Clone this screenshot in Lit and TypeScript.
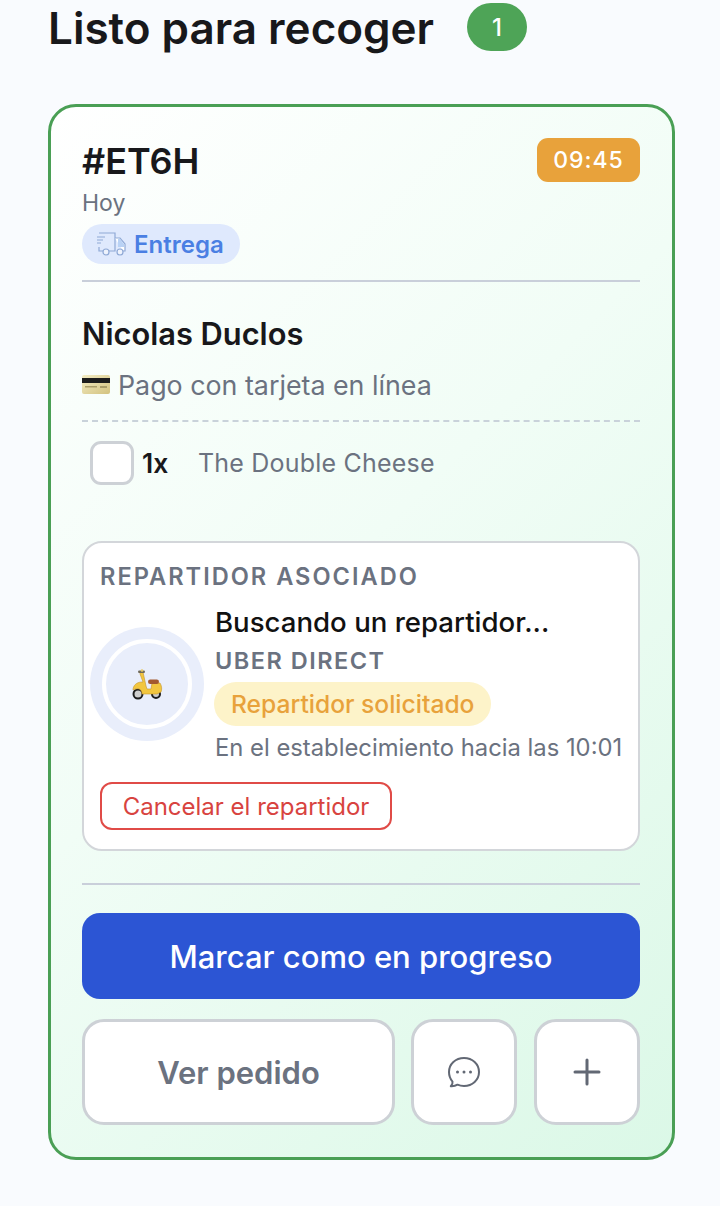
import { LitElement, html, css } from "lit";
import { customElement } from "lit/decorators.js";

@customElement("app-root")
export class AppRoot extends LitElement {
  static styles = css`
    :host { display: block; width: 720px; height: 1206px; overflow: hidden; background: #f9fbfe; font-family: Inter, "Liberation Sans", sans-serif; color: #18181b; box-sizing: border-box; }
    * { box-sizing: border-box; }
    .page { padding: 0 45px 0 48px; display: flex; flex-direction: column; }
    .head { display: flex; align-items: center; gap: 33px; height: 56px; }
    h1 { margin: 0; font-size: 44px; font-weight: 600; line-height: 56px; }
    .count { width: 60px; height: 48px; margin-top: -2px; border-radius: 24px; background: #4ea457; color: #fff; font-size: 24px; font-weight: 500; display: flex; align-items: center; justify-content: center; }
    .card { margin-top: 48px; width: 627px; height: 1056px; border: 3px solid #4a9f55; border-radius: 28px; padding: 31px 32px 0 31px; background: linear-gradient(135deg, #ffffff 0%, #f1fdf6 45%, #dbf8e7 100%); display: flex; flex-direction: column; }
    .top { display: flex; justify-content: space-between; align-items: flex-start; height: 44px; }
    .id { font-size: 36px; font-weight: 600; line-height: 46px; }
    .time { width: 103px; height: 44px; border-radius: 11px; background: #e8a23b; color: #fff; font-size: 23px; font-weight: 500; letter-spacing: 1px; display: flex; align-items: center; justify-content: center; }
    .hoy { margin-top: 6px; font-size: 23px; line-height: 30px; color: #6b7280; }
    .mode { margin-top: 6px; width: 158px; height: 40px; border-radius: 20px; background: #dfe9fd; color: #4a7fe3; font-size: 24px; font-weight: 600; display: flex; align-items: center; gap: 7px; padding-left: 14px; }
    .rule { height: 2px; background: #c9cfda; flex: none; }
    .rule.a { margin-top: 16px; }
    .name { margin-top: 33px; font-size: 30.8px; font-weight: 600; line-height: 38px; }
    .pay { margin-top: 15px; display: flex; align-items: center; gap: 8px; font-size: 26.8px; line-height: 34px; color: #6b7280; }
    .dash { margin-top: 18px; border-top: 2px dashed #c9d2da; flex: none; }
    .item { margin-top: 19px; padding-left: 8px; display: flex; align-items: center; height: 44px; font-size: 25px; }
    .check { width: 44px; height: 44px; border: 3px solid #cdd1d6; border-radius: 11px; background: #fff; }
    .qty { margin-left: 8px; font-size: 26.5px; font-weight: 600; width: 56px; }
    .iname { color: #6b7280; letter-spacing: 0.2px; }
    .box { margin-top: 56px; height: 310px; border: 2px solid #d3d6da; border-radius: 20px; background: #fff; padding: 19px 16px 0 16px; display: flex; flex-direction: column; }
    .lbl { font-size: 23.6px; font-weight: 600; line-height: 30px; letter-spacing: 2px; color: #6b7280; }
    .courier { display: flex; gap: 11px; margin-left: -10px; margin-top: 12px; }
    .avatar { width: 114px; height: 114px; margin-top: 23px; border-radius: 50%; background: #e9eefb; flex: none; display: flex; align-items: center; justify-content: center; }
    .ring { width: 90px; height: 90px; border-radius: 50%; border: 4px solid #fff; display: flex; align-items: center; justify-content: center; }
    .info { display: flex; flex-direction: column; align-items: flex-start; white-space: nowrap; }
    .who { font-size: 27.6px; font-weight: 500; line-height: 36px; color: #111; }
    .svc { margin-top: 6px; font-size: 23.5px; font-weight: 600; line-height: 30px; letter-spacing: 1.5px; color: #6b7280; }
    .status { margin-top: 6px; margin-left: -1px; height: 44px; border-radius: 22px; background: #fdf3c9; color: #e8a23b; font-size: 24.6px; font-weight: 500; padding: 0 17px; display: flex; align-items: center; }
    .eta { margin-top: 6px; font-size: 23.8px; line-height: 32px; color: #6b7280; }
    .cancel { margin-top: 18px; width: 292px; height: 48px; border: 2px solid #e04b47; border-radius: 12px; color: #d8433f; background: #fff; font: 400 24px Inter, sans-serif; display: flex; align-items: center; justify-content: center; padding: 0; flex: none; }
    .rule.b { margin-top: 32px; }
    .primary { margin-top: 28px; height: 86px; border: 0; border-radius: 18px; background: #2c55d4; color: #fff; font: 500 31px Inter, sans-serif; flex: none; }
    .actions { margin-top: 20px; display: grid; grid-template-columns: 313px 106px 107px; gap: 16px; }
    .act { height: 106px; border: 3px solid #cdd1d6; border-radius: 22px; background: #fff; color: #6b7280; font: 600 31px Inter, sans-serif; display: flex; align-items: center; justify-content: center; padding: 0; }
    .act.plus { margin-left: 1px; }
  `;

  render() {
    return html`<div class="page">
      <div class="head"><h1>Listo para recoger</h1><span class="count">1</span></div>
      <div class="card">
        <div class="top"><span class="id">#ET6H</span><span class="time">09:45</span></div>
        <div class="hoy">Hoy</div>
        <div class="mode">
          <svg width="31" height="24" viewBox="0 0 31 24" fill="none" stroke="#8fa9d6" stroke-width="1.2">
            <path d="M3 1h16v18H13M7 19H3v-4" />
            <path d="M19 6h5l5 6v7h-2" fill="#ffffff" />
            <path d="M22 7h2l4 5v3h-6z" fill="#b9d2f5" stroke="none" />
            <path d="M1 5h8M1 8h6M1 11h4" />
            <circle cx="10" cy="20" r="3" fill="#eef3fd" />
            <circle cx="24" cy="20" r="3" fill="#eef3fd" />
          </svg>
          Entrega
        </div>
        <div class="rule a"></div>
        <div class="name">Nicolas Duclos</div>
        <div class="pay">
          <svg width="28" height="20" viewBox="0 0 28 20">
            <defs><linearGradient id="cg" x1="0" y1="0" x2="1" y2="1"><stop offset="0" stop-color="#f3ecc4" /><stop offset="1" stop-color="#d3c27f" /></linearGradient></defs>
            <rect x="0" y="0" width="28" height="19" rx="2" fill="url(#cg)" />
            <rect x="0" y="3" width="28" height="5" fill="#1c1c1c" />
            <rect x="3" y="11" width="12" height="1.500" fill="#a99c68" />
            <rect x="18" y="11" width="7" height="2" fill="#a99c68" />
          </svg>
          Pago con tarjeta en línea
        </div>
        <div class="dash"></div>
        <div class="item"><span class="check"></span><span class="qty">1x</span><span class="iname">The Double Cheese</span></div>
        <div class="box">
          <div class="lbl">REPARTIDOR ASOCIADO</div>
          <div class="courier">
            <div class="avatar"><div class="ring">
              <svg width="32" height="31" viewBox="0 0 32 31">
                <circle cx="7" cy="25" r="4.500" fill="#cfcfcf" stroke="#1d1d1d" stroke-width="2" />
                <circle cx="25" cy="25" r="4" fill="#cfcfcf" stroke="#1d1d1d" stroke-width="2" />
                <path d="M9 3h3l3 14 1 3h4l1-6h8c2 3 2 7 1 9l-4 2H11c0-4-3-6-6-5-1 0-3 1-3 1 0-4 3-8 9-8h1L9 5z" fill="#f2c63f" stroke="#c4932a" stroke-width=".6" />
                <rect x="17" y="10.500" width="11" height="4.500" rx="2.200" fill="#a3592f" />
                <rect x="7" y="1.500" width="7" height="2.500" rx="1.200" fill="#6f6a5a" />
                <circle cx="11" cy="1.500" r="1.300" fill="#e6c96a" />
              </svg>
            </div></div>
            <div class="info">
              <div class="who">Buscando un repartidor...</div>
              <div class="svc">UBER DIRECT</div>
              <div class="status">Repartidor solicitado</div>
              <div class="eta">En el establecimiento hacia las 10:01</div>
            </div>
          </div>
          <button class="cancel">Cancelar el repartidor</button>
        </div>
        <div class="rule b"></div>
        <button class="primary">Marcar como en progreso</button>
        <div class="actions">
          <button class="act">Ver pedido</button>
          <button class="act" aria-label="Mensajes">
            <svg width="34" height="32" viewBox="0 0 34 32" fill="none" stroke="#626874" stroke-width="2" stroke-linejoin="round">
              <path d="M17 2c8.400 0 15 6 15 14s-6.600 14-15 14c-2.500 0-4.500-.4-6.500-1.300C8.500 30 6.500 30.500 3.800 30.300c1.400-1.500 2-3 1.700-4.700C3.300 23 2 19.800 2 16 2 8 8.600 2 17 2z" />
              <circle cx="10.500" cy="16" r="1.500" fill="#626874" stroke="none" />
              <circle cx="17" cy="16" r="1.500" fill="#626874" stroke="none" />
              <circle cx="23.500" cy="16" r="1.500" fill="#626874" stroke="none" />
            </svg>
          </button>
          <button class="act plus" aria-label="Añadir">
            <svg width="28" height="28" viewBox="0 0 28 28" stroke="#626874" stroke-width="3" stroke-linecap="round"><path d="M14 2v24M2 14h24" /></svg>
          </button>
        </div>
      </div>
    </div>`;
  }
}
